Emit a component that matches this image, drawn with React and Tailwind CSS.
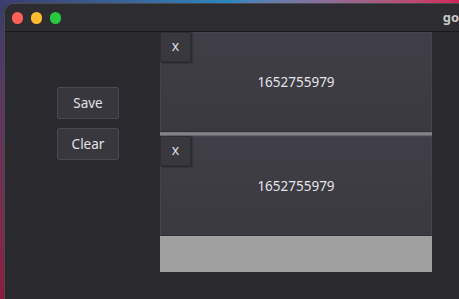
import React from "react";

const font = { fontFamily: '"Noto Sans", "Open Sans", sans-serif' };

function Card({ value }) {
  return (
    <div className="relative h-[100px] bg-gradient-to-b from-[#403f47] to-[#3a3940] border border-[#45444c] border-b-[#323137] flex items-center justify-center">
      <div className="absolute -left-px -top-px w-[31px] h-[30px] bg-[#39383f] border border-[#2e2d33] shadow-[1px_1px_2px_rgba(0,0,0,0.45)] flex items-center justify-center text-[14px] text-[#dedde2] leading-none pb-[2px]">
        x
      </div>
      <span className="text-[13.5px] text-[#e4e3e8] leading-none mt-[1px]">{value}</span>
    </div>
  );
}

export default function App() {
  return (
    <div
      className="w-[459px] h-[299px] overflow-hidden flex flex-col bg-gradient-to-b from-[#3a3d6c] to-[#8c1c3e]"
      style={font}
    >
      <div className="h-[3px] shrink-0 bg-gradient-to-r from-[#3a3d6c] via-[#2a86bf] to-[#d0225a]" />
      <div className="flex-1 flex">
        <div className="w-[4px] shrink-0" />
        <div className="flex-1 flex flex-col rounded-tl-[10px] overflow-hidden border-l border-t border-[#4a494f] bg-[#2a292e]">
          <div className="h-[27px] shrink-0 bg-[#2d2c30] flex items-center pl-[7px] gap-[8px] whitespace-nowrap">
            <div className="w-[12px] h-[12px] rounded-full bg-[#fe5f57]" />
            <div className="w-[12px] h-[12px] rounded-full bg-[#febc2e]" />
            <div className="w-[12px] h-[12px] rounded-full bg-[#28c840]" />
            <span className="ml-[374px] text-[13px] font-bold text-[#c9c8cc]">go</span>
          </div>
          <div className="h-[1px] shrink-0 bg-[#19181b]" />
          <div className="flex-1 flex">
            <div className="w-[155px] shrink-0 flex flex-col items-start pl-[52px] pt-[55px] gap-[9px]">
              <div className="w-[62px] h-[32px] bg-[#38373e] border border-[#4a4950] rounded-[2px] flex items-center justify-center text-[13.5px] text-[#e2e1e6]">
                Save
              </div>
              <div className="w-[62px] h-[32px] bg-[#38373e] border border-[#4a4950] rounded-[2px] flex items-center justify-center text-[13.5px] text-[#e2e1e6]">
                Clear
              </div>
            </div>
            <div className="w-[272px] shrink-0 flex flex-col">
              <Card value="1652755979" />
              <div className="h-[4px] bg-gradient-to-b from-[#6c6b70] via-[#8e8d92] to-[#5a595e]" />
              <Card value="1652755979" />
              <div className="h-[36px] bg-[#a0a0a0]" />
            </div>
          </div>
        </div>
      </div>
    </div>
  );
}
